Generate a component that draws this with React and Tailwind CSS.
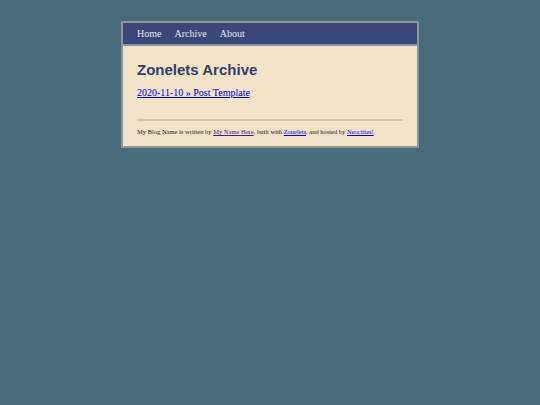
export default function App() {
  const serif = { fontFamily: '"Liberation Serif", "DejaVu Serif", Georgia, serif' };
  return (
    <div className="min-h-screen w-full bg-[#476b7b] pt-[21px]" style={serif}>
      <div className="mx-auto w-[298px] border-2 border-[#8e9599] bg-[#f1e3c7]">
        <nav className="flex h-[23px] items-center gap-[13px] border-b-2 border-[#8e9599] bg-[#3a4779] px-[14px] text-[10px] text-[#e8e6ee]">
          <span>Home</span>
          <span>Archive</span>
          <span>About</span>
        </nav>
        <div className="px-[14px] pt-[14px] pb-[9px]">
          <h1
            className="text-[15px] font-bold leading-[20px] text-[#36416a]"
            style={{ fontFamily: '"Liberation Sans", Arial, sans-serif' }}
          >
            Zonelets Archive
          </h1>
          <div className="mt-[6px] text-[10px] leading-[14px]">
            <a className="text-[#0000ee] underline">2020-11-10 » Post Template</a>
          </div>
          <div className="mt-[19px] h-[2px] bg-[#d4c5a6]" />
          <p className="mt-[6px] text-[6.5px] leading-[10px] text-[#222]">
            My Blog Name is written by{" "}
            <a className="text-[#551a8b] underline">My Name Here</a>, built with{" "}
            <a className="text-[#0000ee] underline">Zonelets</a>, and hosted by{" "}
            <a className="text-[#0000ee] underline">Neocities!</a>
          </p>
        </div>
      </div>
    </div>
  );
}
